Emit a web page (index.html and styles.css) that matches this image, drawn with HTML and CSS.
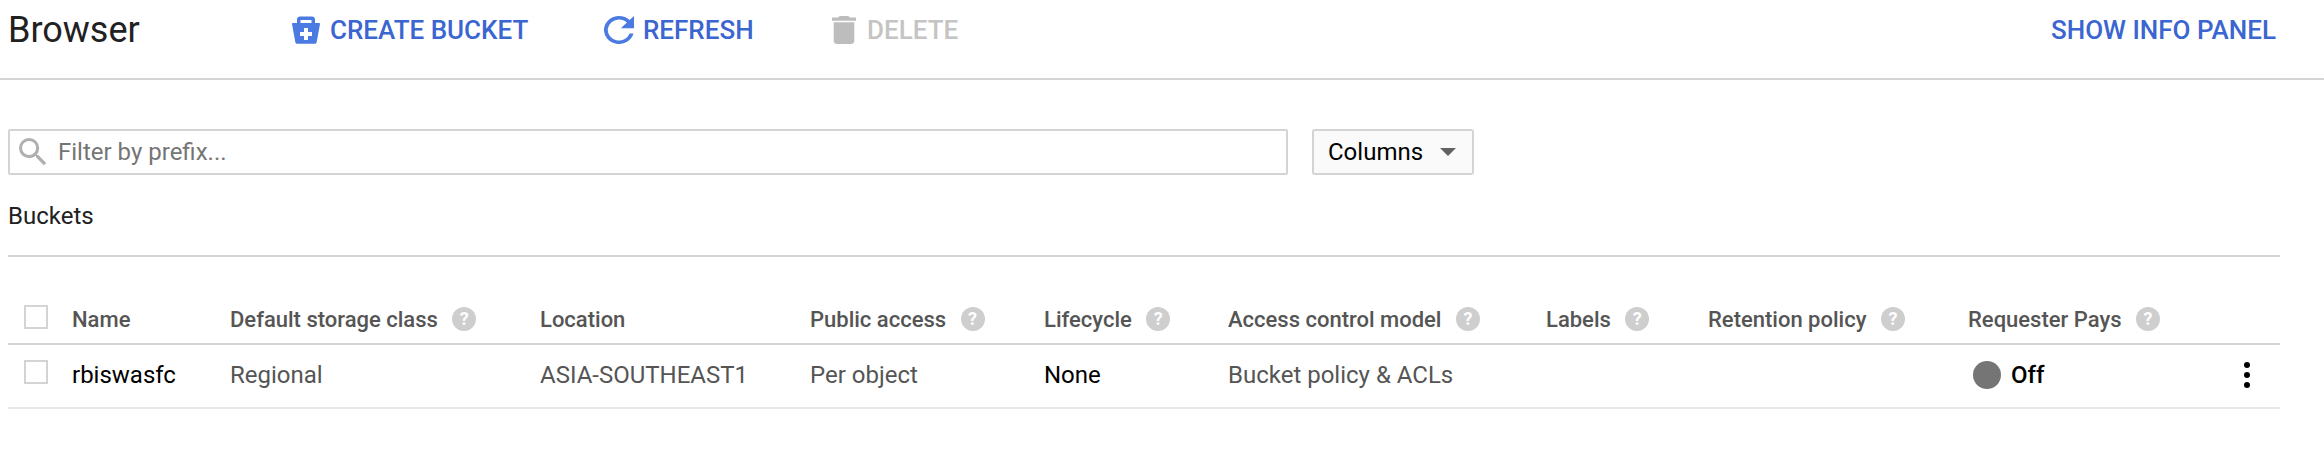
FILE: index.html
```html
<!DOCTYPE html>
<html lang="en">
<head>
    <meta charset="UTF-8">
    <meta name="viewport" content="width=device-width, initial-scale=1.0">
    <title>Browser</title>
    <link rel="stylesheet" href="styles.css">
</head>
<body>
    <header class="toolbar">
        <h1 class="page-title">Browser</h1>
        <a class="action action-create">
            <svg class="icon-bucket" viewBox="0 0 28 28"><path d="M5 3.500C5 1.500 6.500 0.500 8 0.500h12c1.500 0 3 1 3 3V7h4c.6 0 1 .4 1 1l-3.300 18c-.2 1-1 1.800-2 1.800H5.300c-1 0-1.800-.8-2-1.800L0 8c0-.6.4-1 1-1h4V3.500zM8.500 4v3h11V4h-11zM12 12v4H8v4h4v4h4v-4h4v-4h-4v-4h-4z" fill-rule="evenodd"/></svg>
            CREATE BUCKET
        </a>
        <a class="action action-refresh">
            <svg class="icon-refresh" viewBox="4 4 16 16" preserveAspectRatio="none"><path d="M17.650 6.350A7.960 7.960 0 0 0 12 4a8 8 0 1 0 7.730 10h-2.080A6 6 0 1 1 12 6c1.660 0 3.140.69 4.220 1.780L13 11h7V4l-2.350 2.350z"/></svg>
            REFRESH
        </a>
        <a class="action action-delete">
            <svg class="icon-delete" viewBox="5 3 14 18" preserveAspectRatio="none"><path d="M6 19c0 1.100.9 2 2 2h8c1.100 0 2-.9 2-2V7H6v12zM19 4h-3.500l-1-1h-5l-1 1H5v2h14V4z"/></svg>
            DELETE
        </a>
        <a class="action action-info">SHOW INFO PANEL</a>
    </header>

    <div class="filter-row">
        <div class="filter-box">
            <svg class="icon-search" viewBox="3 3 18 18"><path d="M15.500 14h-.79l-.28-.27A6.470 6.470 0 0 0 16 9.500 6.500 6.500 0 1 0 9.500 16c1.610 0 3.090-.59 4.230-1.570l.27.28v.79l5 4.990L20.490 19l-4.990-5zm-6 0C7.010 14 5 11.990 5 9.500S7.010 5 9.500 5 14 7.010 14 9.500 11.990 14 9.500 14z"/></svg>
            <span class="filter-placeholder">Filter by prefix...</span>
        </div>
        <div class="columns-btn">
            Columns
            <span class="caret"></span>
        </div>
    </div>

    <h2 class="section-title">Buckets</h2>

    <div class="bucket-table">
        <div class="row row-head">
            <span class="checkbox"></span>
            <span class="cell">Name</span>
            <span class="cell">Default storage class <i class="help">?</i></span>
            <span class="cell">Location</span>
            <span class="cell">Public access <i class="help">?</i></span>
            <span class="cell">Lifecycle <i class="help">?</i></span>
            <span class="cell">Access control model <i class="help">?</i></span>
            <span class="cell">Labels <i class="help">?</i></span>
            <span class="cell">Retention policy <i class="help">?</i></span>
            <span class="cell">Requester Pays <i class="help">?</i></span>
            <span class="cell"></span>
        </div>
        <div class="row row-body">
            <span class="checkbox"></span>
            <span class="cell cell-strong">rbiswasfc</span>
            <span class="cell">Regional</span>
            <span class="cell">ASIA-SOUTHEAST1</span>
            <span class="cell">Per object</span>
            <span class="cell cell-strong">None</span>
            <span class="cell">Bucket policy &amp; ACLs</span>
            <span class="cell"></span>
            <span class="cell"></span>
            <span class="cell cell-strong cell-status"><i class="status-dot"></i>Off</span>
            <span class="cell cell-menu"><i class="kebab"></i></span>
        </div>
    </div>
</body>
</html>
```

FILE: styles.css
```css
body {
    margin: 0;
    font-family: Roboto, "Liberation Sans", sans-serif;
    background-color: #fff;
    color: #000;
    overflow: hidden;
}
.toolbar {
    display: flex;
    align-items: flex-start;
    height: 78px;
    padding: 0 48px 0 8px;
    border-bottom: 2px solid #d4d4d4;
}
.page-title {
    margin: 9px 0 0;
    width: 284px;
    font-size: 36px;
    line-height: 42px;
    font-weight: 400;
    color: #212121;
}
.action {
    display: flex;
    align-items: center;
    height: 28px;
    margin-top: 16px;
    font-size: 26px;
    font-weight: 500;
    color: #3b65d0;
}
.action svg {
    fill: #4a7ae2;
}
.action-create {
    width: 312px;
}
.icon-bucket {
    width: 28px;
    height: 28px;
    margin-right: 10px;
}
.action-refresh {
    width: 228px;
}
.icon-refresh {
    width: 30px;
    height: 28px;
    margin-right: 9px;
}
.action-delete {
    color: #c4c4c4;
}
.action-delete svg {
    fill: #bdbdbd;
}
.icon-delete {
    width: 24px;
    height: 28px;
    margin-right: 11px;
}
.action-info {
    margin-left: auto;
}
.filter-row {
    display: flex;
    gap: 24px;
    margin: 49px 0 0 8px;
}
.filter-box {
    display: flex;
    align-items: center;
    box-sizing: border-box;
    width: 1280px;
    height: 46px;
    padding-left: 9px;
    border: 2px solid #d4d4d4;
    border-radius: 2px;
}
.icon-search {
    width: 28px;
    height: 28px;
    margin-right: 11px;
    fill: #b0b0b0;
}
.filter-placeholder {
    font-size: 24px;
    color: #757575;
}
.columns-btn {
    display: flex;
    align-items: center;
    box-sizing: border-box;
    width: 162px;
    height: 46px;
    padding-left: 14px;
    border: 2px solid #d4d4d4;
    border-radius: 3px;
    background-color: #fafafa;
    font-size: 24px;
}
.caret {
    margin-left: 17px;
    border-left: 8px solid transparent;
    border-right: 8px solid transparent;
    border-top: 8px solid #616161;
}
.section-title {
    margin: 27px 0 0 8px;
    font-size: 24px;
    line-height: 28px;
    font-weight: 400;
    color: #212121;
}
.bucket-table {
    margin: 25px 44px 0 8px;
    border-top: 2px solid #d4d4d4;
}
.row {
    display: grid;
    grid-template-columns: 64px 158px 310px 270px 234px 184px 318px 162px 260px 272px 40px;
    align-items: center;
    font-size: 24px;
}
.row-head {
    height: 86px;
    border-bottom: 2px solid #d4d4d4;
    font-size: 22px;
    font-weight: 500;
    color: #555;
}
.row-head .cell {
    margin-top: 38px;
}
.row-head .checkbox {
    margin-top: 34px;
}
.row-body {
    height: 59px;
    padding-bottom: 3px;
    border-bottom: 2px solid #e8e8e8;
    color: #555;
}
.row-body .checkbox {
    margin-bottom: 5px;
}
.checkbox {
    box-sizing: border-box;
    width: 24px;
    height: 24px;
    margin-left: 16px;
    border: 2px solid #d4d4d4;
}
.cell {
    display: flex;
    align-items: center;
    white-space: pre;
}
.cell-strong {
    color: #000;
}
.help {
    display: inline-block;
    width: 24px;
    height: 24px;
    margin-left: 9px;
    border-radius: 50%;
    background-color: #cecece;
    color: #fff;
    font-size: 18px;
    font-style: normal;
    font-weight: 700;
    line-height: 24px;
    text-align: center;
}
.status-dot {
    width: 28px;
    height: 28px;
    margin-right: 10px;
    border-radius: 50%;
    background-color: #757575;
}
.cell-status {
    font-weight: 500;
    margin-left: 5px;
}
.cell-menu {
    padding-left: 4px;
}
.kebab {
    width: 6px;
    height: 6px;
    border-radius: 50%;
    background-color: #000;
    box-shadow: 0 -10px 0 #000, 0 10px 0 #000;
}
```
